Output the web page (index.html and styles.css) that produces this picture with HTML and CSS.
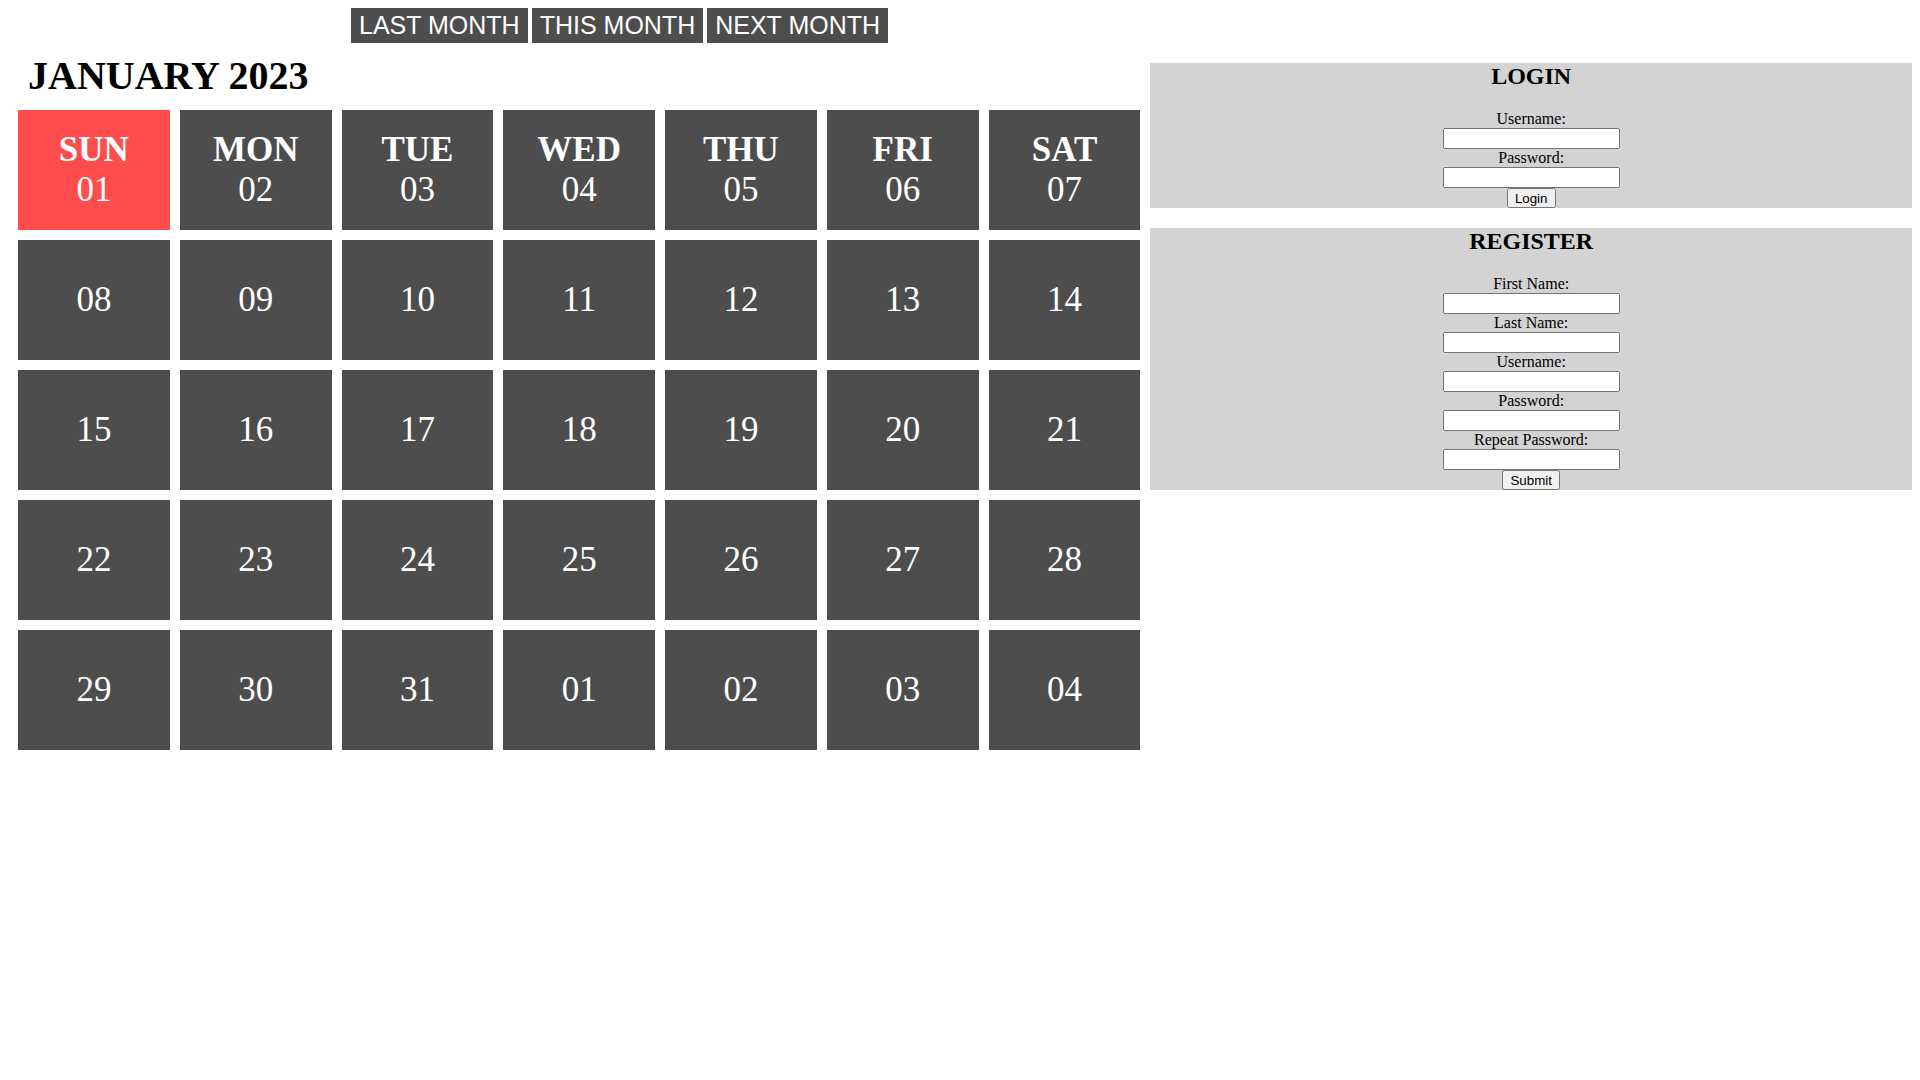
FILE: index.html
```html
<!doctype html>
<html>

<head>
	<meta charset=utf-8>
	<title>Calendar</title>
	<meta name=viewport content="width=device-width, initial-scale=1">
	<link rel="stylesheet" href="styles.css">
</head>

<body>
	<div class="topbar">
		<button class="navbtn">LAST MONTH</button>
		<button class="navbtn">THIS MONTH</button>
		<button class="navbtn">NEXT MONTH</button>
	</div>

	<div class="main">
		<section class="calendar">
			<h1>JANUARY 2023</h1>
			<table>
				<tr>
					<td class="today"><b>SUN</b><br>01</td>
					<td><b>MON</b><br>02</td>
					<td><b>TUE</b><br>03</td>
					<td><b>WED</b><br>04</td>
					<td><b>THU</b><br>05</td>
					<td><b>FRI</b><br>06</td>
					<td><b>SAT</b><br>07</td>
				</tr>
				<tr>
					<td>08</td><td>09</td><td>10</td><td>11</td><td>12</td><td>13</td><td>14</td>
				</tr>
				<tr>
					<td>15</td><td>16</td><td>17</td><td>18</td><td>19</td><td>20</td><td>21</td>
				</tr>
				<tr>
					<td>22</td><td>23</td><td>24</td><td>25</td><td>26</td><td>27</td><td>28</td>
				</tr>
				<tr>
					<td>29</td><td>30</td><td>31</td><td>01</td><td>02</td><td>03</td><td>04</td>
				</tr>
			</table>
		</section>

		<section class="side">
			<form class="panel">
				<h2>LOGIN</h2>
				<label>Username:</label>
				<input type="text">
				<label>Password:</label>
				<input type="password">
				<button type="button">Login</button>
			</form>

			<form class="panel">
				<h2>REGISTER</h2>
				<label>First Name:</label>
				<input type="text">
				<label>Last Name:</label>
				<input type="text">
				<label>Username:</label>
				<input type="text">
				<label>Password:</label>
				<input type="password">
				<label>Repeat Password:</label>
				<input type="password">
				<button type="button">Submit</button>
			</form>
		</section>
	</div>
</body>
</html>
```

FILE: styles.css
```css
body{
	margin: 8px;
	font-family: "Liberation Serif", "Times New Roman", serif;
	color: #000;
	background: #fff;
}

.topbar{
	height: 35px;
	padding-left: 343px;
	font-size: 16px;
}

.navbtn{
	height: 35px;
	margin: 0;
	padding: 0 8px;
	border: none;
	background-color: #4d4d4d;
	color: #fff;
	font-family: "Liberation Sans", Arial, sans-serif;
	font-size: 25px;
	vertical-align: top;
}

.main{
	display: flex;
	flex-direction: row;
}

.calendar{
	width: 60%;
}

.side{
	width: 40%;
	padding-top: 20px;
}

h1{
	margin: 9px 0 1px 20px;
	font-size: 40px;
}

table{
	width: 100%;
	table-layout: fixed;
	border-spacing: 10px;
}

td{
	height: 120px;
	padding: 0;
	background-color: #4d4d4d;
	color: #fff;
	text-align: center;
	vertical-align: middle;
	font-size: 35px;
}

td.today{
	background-color: #ff4d4d;
}

.panel{
	display: flex;
	flex-direction: column;
	align-items: center;
	margin: 0 0 20px;
	background-color: #d3d3d3;
}

.panel h2{
	margin: 0 0 20px;
	font-size: 24px;
}

.panel label{
	font-size: 16px;
	line-height: 18px;
}

.panel input{
	width: 177px;
	height: 21px;
	box-sizing: border-box;
	margin: 0;
}

.panel button{
	margin: 0;
	height: 20px;
	padding: 0 6px;
	font-family: "Liberation Sans", Arial, sans-serif;
	font-size: 13.333px;
}
```
